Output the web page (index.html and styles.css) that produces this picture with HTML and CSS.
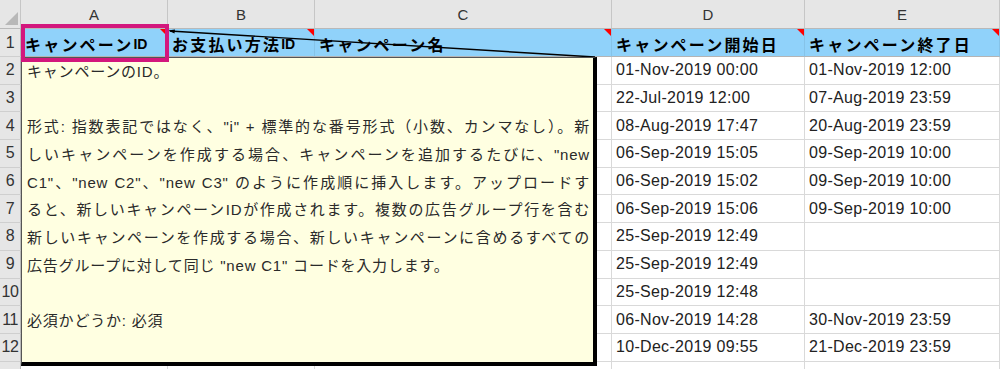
FILE: index.html
```html
<!DOCTYPE html>
<html lang="ja">
<head>
<meta charset="utf-8">
<link rel="stylesheet" href="styles.css">
</head>
<body>
<div class="sheet">
  <div class="grid">
    <div class="corner"><svg class="corner-tri" width="21" height="29" viewBox="0 0 21 29"><polygon points="5,25 18,25 18,12" fill="#b8b8b8"/></svg></div>
    <div class="colhead">A</div>
    <div class="colhead">B</div>
    <div class="colhead">C</div>
    <div class="colhead">D</div>
    <div class="colhead">E</div>

    <div class="rowhead">1</div>
    <div class="cell hdr">キャンペーン<span class="lat">ID</span><i class="flag"></i></div>
    <div class="cell hdr">お支払い方法<span class="lat">ID</span><i class="flag"></i></div>
    <div class="cell hdr">キャンペーン名<i class="flag"></i></div>
    <div class="cell hdr">キャンペーン開始日<i class="flag"></i></div>
    <div class="cell hdr">キャンペーン終了日<i class="flag"></i></div>

    <div class="rowhead">2</div><div class="cell"></div><div class="cell"></div><div class="cell"></div><div class="cell date">01-Nov-2019 00:00</div><div class="cell date">01-Nov-2019 12:00</div>
    <div class="rowhead">3</div><div class="cell"></div><div class="cell"></div><div class="cell"></div><div class="cell date">22-Jul-2019 12:00</div><div class="cell date">07-Aug-2019 23:59</div>
    <div class="rowhead">4</div><div class="cell"></div><div class="cell"></div><div class="cell"></div><div class="cell date">08-Aug-2019 17:47</div><div class="cell date">20-Aug-2019 23:59</div>
    <div class="rowhead">5</div><div class="cell"></div><div class="cell"></div><div class="cell"></div><div class="cell date">06-Sep-2019 15:05</div><div class="cell date">09-Sep-2019 10:00</div>
    <div class="rowhead">6</div><div class="cell"></div><div class="cell"></div><div class="cell"></div><div class="cell date">06-Sep-2019 15:02</div><div class="cell date">09-Sep-2019 10:00</div>
    <div class="rowhead">7</div><div class="cell"></div><div class="cell"></div><div class="cell"></div><div class="cell date">06-Sep-2019 15:06</div><div class="cell date">09-Sep-2019 10:00</div>
    <div class="rowhead">8</div><div class="cell"></div><div class="cell"></div><div class="cell"></div><div class="cell date">25-Sep-2019 12:49</div><div class="cell date"></div>
    <div class="rowhead">9</div><div class="cell"></div><div class="cell"></div><div class="cell"></div><div class="cell date">25-Sep-2019 12:49</div><div class="cell date"></div>
    <div class="rowhead">10</div><div class="cell"></div><div class="cell"></div><div class="cell"></div><div class="cell date">25-Sep-2019 12:48</div><div class="cell date"></div>
    <div class="rowhead">11</div><div class="cell"></div><div class="cell"></div><div class="cell"></div><div class="cell date">06-Nov-2019 14:28</div><div class="cell date">30-Nov-2019 23:59</div>
    <div class="rowhead">12</div><div class="cell"></div><div class="cell"></div><div class="cell"></div><div class="cell date">10-Dec-2019 09:55</div><div class="cell date">21-Dec-2019 23:59</div>
    <div class="rowhead"></div><div class="cell"></div><div class="cell"></div><div class="cell"></div><div class="cell"></div><div class="cell"></div>
  </div>

  <svg class="arrow" width="1000" height="369" viewBox="0 0 1000 369">
    <line x1="170" y1="31" x2="595" y2="57" stroke="#000" stroke-width="1.4"/>
    <polygon points="168,30.5 175,29.5 174.5,33.5" fill="#000"/>
  </svg>

  <div class="comment">
    <div class="line">キャンペーンのID。</div>
    <div class="line"></div>
    <div class="line j">形式: 指数表記ではなく、"i" + 標準的な番号形式（小数、カンマなし）。新</div>
    <div class="line j">しいキャンペーンを作成する場合、キャンペーンを追加するたびに、"new</div>
    <div class="line j">C1"、"new C2"、"new C3" のように作成順に挿入します。アップロードす</div>
    <div class="line j">ると、新しいキャンペーンIDが作成されます。複数の広告グループ行を含む</div>
    <div class="line j">新しいキャンペーンを作成する場合、新しいキャンペーンに含めるすべての</div>
    <div class="line">広告グループに対して同じ "new C1" コードを入力します。</div>
    <div class="line"></div>
    <div class="line">必須かどうか: 必須</div>
  </div>

  <div class="highlight"></div>
</div>
</body>
</html>
```

FILE: styles.css
```css
* { box-sizing: border-box; }
html, body {
  margin: 0;
  padding: 0;
  background: #fff;
  overflow: hidden;
}
body {
  width: 1000px;
  height: 369px;
  font-family: "Liberation Sans", "Noto Sans CJK JP", sans-serif;
  color: #222;
}
.sheet {
  position: relative;
  width: 1000px;
  height: 369px;
  overflow: hidden;
}
.grid {
  display: grid;
  grid-template-columns: 21px 147px 147px 297px 193px 195px;
  grid-template-rows: 29px 28px repeat(12, 27.7px);
}
.corner {
  background: #e6e6e6;
  border-right: 1px solid #c6c6c6;
  border-bottom: 1px solid #b9b9b9;
}
.corner-tri { display: block; }
.colhead {
  background: #e6e6e6;
  border-right: 1px solid #c6c6c6;
  border-bottom: 1px solid #b9b9b9;
  display: flex;
  align-items: center;
  justify-content: center;
  font-size: 15px;
  color: #333;
  padding-top: 1px;
}
.rowhead {
  background: #e6e6e6;
  border-right: 1px solid #b9b9b9;
  border-bottom: 1px solid #cfcfcf;
  display: flex;
  align-items: center;
  justify-content: center;
  font-size: 16px;
  color: #333;
  letter-spacing: -0.5px;
}
.cell {
  position: relative;
  border-right: 1px solid #d9d9d9;
  border-bottom: 1px solid #d9d9d9;
  display: flex;
  align-items: center;
  padding: 0 4px;
  white-space: nowrap;
  overflow: visible;
}
.hdr {
  background: #90d2fa;
  border-right: 1px solid #86c3e8;
  border-bottom: 1px solid #b4b4b4;
  font-weight: bold;
  font-size: 16px;
  letter-spacing: 2.2px;
  color: #000;
  padding-top: 3px;
}
.hdr .lat {
  font-size: 14px;
  letter-spacing: 0;
}
.flag {
  position: absolute;
  top: 0;
  right: 0;
  width: 7px;
  height: 7px;
  background: #ff0000;
  clip-path: polygon(0 0, 100% 0, 100% 100%);
}
.date {
  font-size: 16px;
  letter-spacing: 0.3px;
  color: #222;
}
.arrow {
  position: absolute;
  left: 0;
  top: 0;
  pointer-events: none;
}
.comment {
  position: absolute;
  left: 21px;
  top: 57px;
  width: 576px;
  height: 309px;
  background: #ffffe1;
  border-top: 1px solid #555;
  border-left: 1px solid #555;
  border-right: 4px solid #000;
  border-bottom: 4px solid #000;
  padding: 0 3px 0 5px;
  font-size: 15px;
  letter-spacing: 0.8px;
  color: #2a2a2a;
}
.line {
  height: 27.7px;
  line-height: 27.7px;
  white-space: nowrap;
}
.line.j {
  white-space: normal;
  text-align: justify;
  text-align-last: justify;
  overflow: hidden;
}
.highlight {
  position: absolute;
  left: 21px;
  top: 24px;
  width: 148px;
  height: 38px;
  border: 4px solid #d3177d;
  pointer-events: none;
}
```
